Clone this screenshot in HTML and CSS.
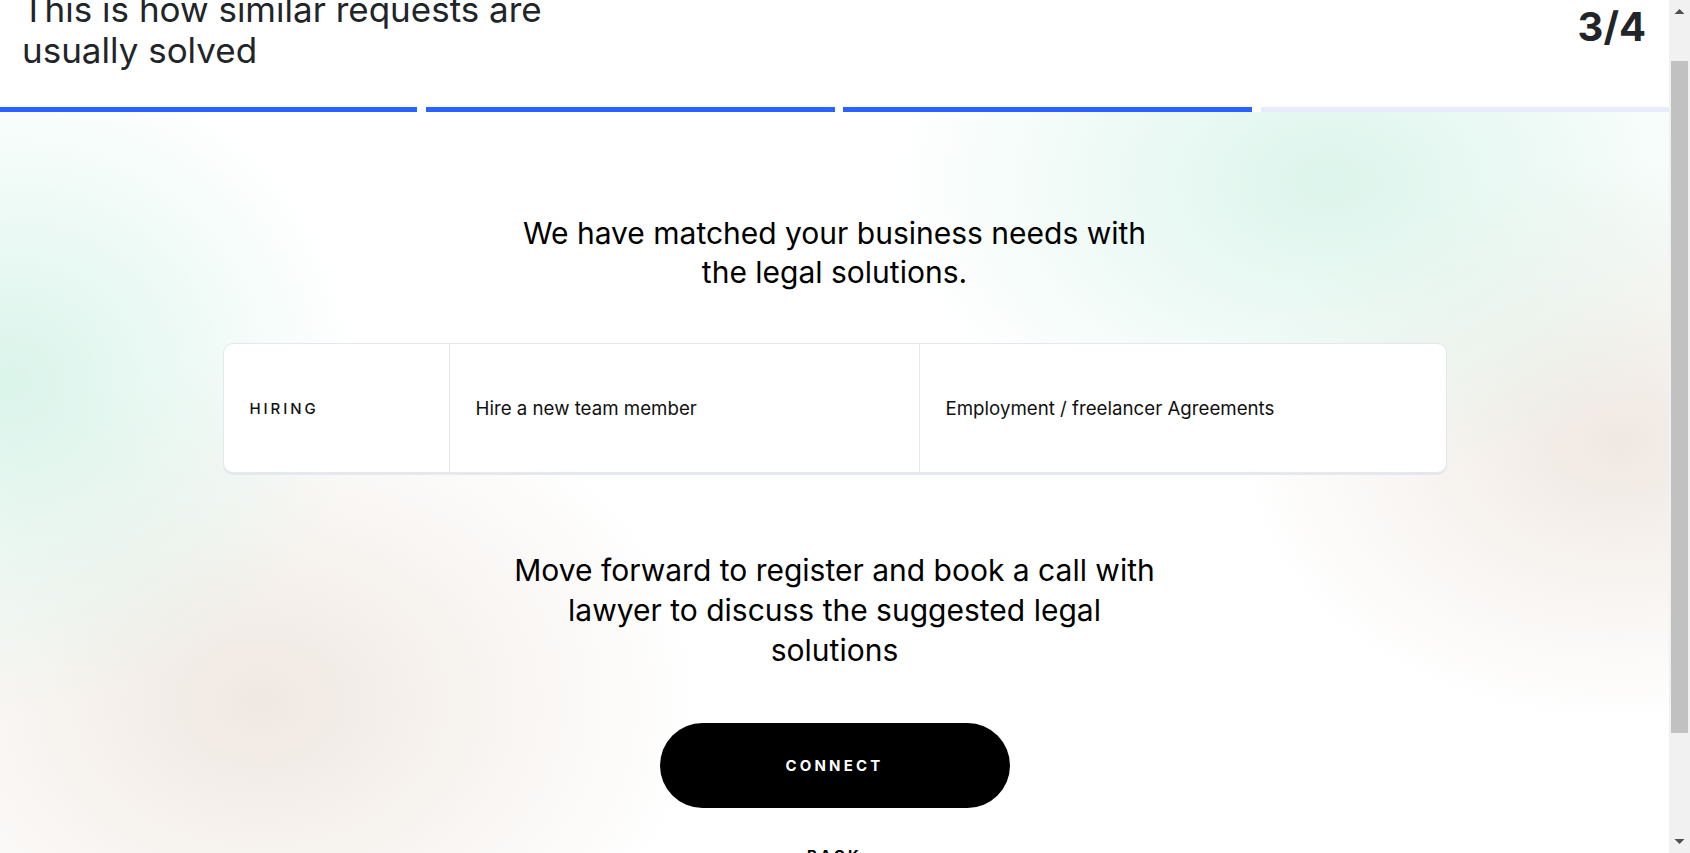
FILE: index.html
```html
<!DOCTYPE html>
<html lang="en">
<head>
<meta charset="utf-8">
<title>Legal solutions – step 3 of 4</title>
<link rel="stylesheet" href="styles.css">
</head>
<body>
<header class="top">
  <div class="top-row">
    <h1 class="title">This is how similar requests are usually solved</h1>
    <div class="step">3/4</div>
  </div>
  <div class="progress">
    <span class="seg done"></span>
    <span class="seg done"></span>
    <span class="seg done"></span>
    <span class="seg"></span>
  </div>
</header>
<main class="stage">
  <p class="lead">We have matched your business needs with the legal solutions.</p>
  <div class="match-card">
    <div class="cell cat">HIRING</div>
    <div class="cell">Hire a new team member</div>
    <div class="cell">Employment / freelancer Agreements</div>
  </div>
  <p class="lead lead-2">Move forward to register and book a call with lawyer to discuss the suggested legal solutions</p>
  <button class="btn-connect" type="button">CONNECT</button>
  <button class="btn-back" type="button">BACK</button>
</main>
<div class="scrollbar" aria-hidden="true">
  <svg class="sb-btn" width="21" height="21" viewBox="0 0 21 21"><path d="M5.5 14 L10.5 9 L15.5 14 Z" fill="#505050"/></svg>
  <div class="sb-track"><div class="sb-thumb"></div></div>
  <svg class="sb-btn" width="21" height="21" viewBox="0 0 21 21"><path d="M5.5 7 L10.5 12 L15.5 7 Z" fill="#505050"/></svg>
</div>
<script src="script.js"></script>
</body>
</html>
```

FILE: styles.css
```css
html { scroll-behavior: auto; }
body {
  margin: 0;
  padding-right: 21px;
  font-family: "Inter", "Noto Sans", sans-serif;
  color: #000;
  background: #fff;
}
.top {
  background: #fff;
}
.top-row {
  display: flex;
  justify-content: space-between;
  align-items: flex-start;
  padding: 30px 23px 36px 22px;
}
.title {
  margin: 0;
  max-width: 600px;
  font-size: 35px;
  line-height: 41px;
  font-weight: 400;
  color: #212529;
}
.step {
  margin-top: 16px;
  font-size: 40px;
  line-height: 44px;
  font-weight: 700;
  color: #212529;
}
.progress {
  display: grid;
  grid-template-columns: 417px 409px 409px 1fr;
  gap: 8.5px;
}
.seg {
  display: block;
  height: 5px;
  background: #e8ecfb;
}
.seg.done { background: #2962ff; }

.stage {
  display: flex;
  flex-direction: column;
  align-items: center;
  min-height: 1000px;
  box-sizing: border-box;
  padding-top: 102px;
  background:
    radial-gradient(ellipse 350px 330px at 10px 270px, rgba(214, 243, 232, 0.9), rgba(214, 243, 232, 0) 100%),
    radial-gradient(ellipse 440px 340px at 260px 590px, rgba(238, 230, 223, 0.9), rgba(238, 230, 223, 0) 100%),
    radial-gradient(ellipse 440px 300px at 1330px 70px, rgba(214, 243, 232, 0.85), rgba(214, 243, 232, 0) 100%),
    radial-gradient(ellipse 380px 280px at 1620px 330px, rgba(238, 230, 223, 0.9), rgba(238, 230, 223, 0) 100%),
    #fff;
  background-repeat: no-repeat;
}
.lead {
  margin: 0;
  max-width: 650px;
  text-align: center;
  font-size: 30px;
  line-height: 39px;
  font-weight: 400;
}
.lead-2 {
  line-height: 40px;
  margin-top: 77px;
}
.match-card {
  margin-top: 51px;
  width: 1224px;
  height: 130px;
  box-sizing: border-box;
  display: grid;
  grid-template-columns: 225px 470px 1fr;
  background: #fff;
  border: 1px solid #e6e8ef;
  border-radius: 10px;
  box-shadow: 0 2px 0 rgba(226, 229, 239, 0.9);
  overflow: hidden;
}
.cell {
  display: flex;
  align-items: center;
  padding-left: 26px;
  font-size: 18.7px;
  color: #111;
}
.cell + .cell { border-left: 1px solid #e6e8ef; }
.cell.cat {
  font-size: 15px;
  font-weight: 500;
  letter-spacing: 2.9px;
}
.btn-connect {
  margin-top: 53px;
  width: 350px;
  height: 85px;
  border: 0;
  border-radius: 43px;
  background: #000;
  color: #fff;
  font-family: "Inter", sans-serif;
  font-size: 15px;
  font-weight: 700;
  letter-spacing: 3.2px;
  cursor: pointer;
}
.btn-back {
  margin-top: 38px;
  border: 0;
  background: none;
  padding: 0;
  color: #000;
  font-family: "Inter", sans-serif;
  font-size: 15px;
  font-weight: 700;
  letter-spacing: 3.2px;
}

.scrollbar {
  position: fixed;
  top: 0;
  right: 0;
  width: 21px;
  height: 100vh;
  background: #f1f1f1;
  display: flex;
  flex-direction: column;
}
.sb-btn {
  display: block;
  flex: none;
}
.sb-track {
  flex: 1;
  padding-top: 40px;
}
.sb-thumb {
  height: 672px;
  margin: 0 2px;
  background: #c1c1c1;
}
```

FILE: script.js
```js
window.scrollTo(0, 41);
```
